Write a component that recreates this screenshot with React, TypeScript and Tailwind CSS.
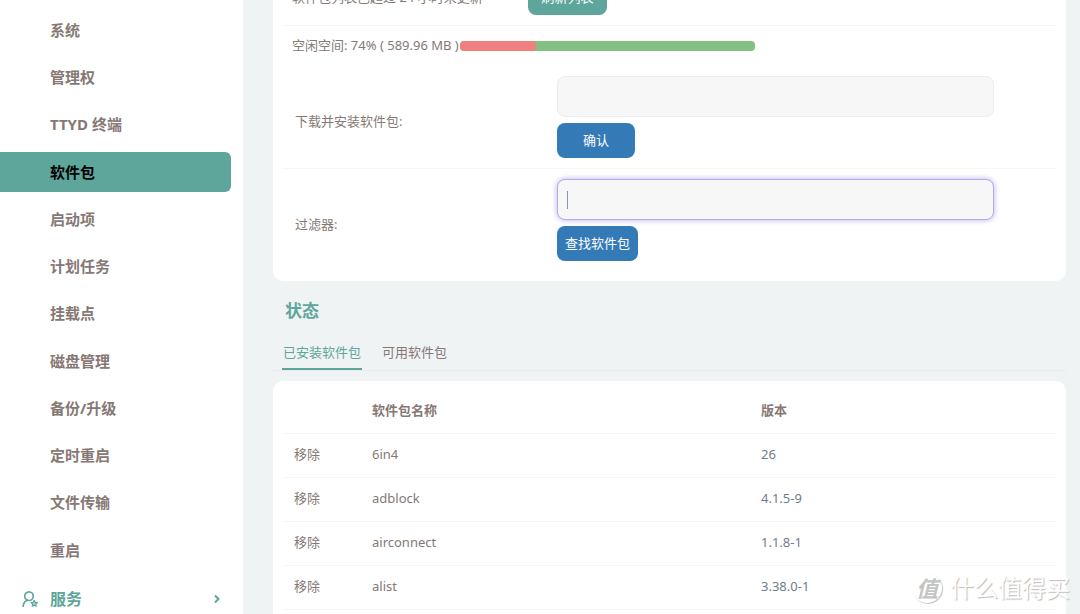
import { useState } from 'react';

interface PackageInfo {
  name: string;
  version: string;
}

const menuItems = [
  '系统',
  '管理权',
  'TTYD 终端',
  '软件包',
  '启动项',
  '计划任务',
  '挂载点',
  '磁盘管理',
  '备份/升级',
  '定时重启',
  '文件传输',
  '重启',
];

const tabs = ['已安装软件包', '可用软件包'];

const packages: PackageInfo[] = [
  { name: '6in4', version: '26' },
  { name: 'adblock', version: '4.1.5-9' },
  { name: 'airconnect', version: '1.1.8-1' },
  { name: 'alist', version: '3.38.0-1' },
];

function Sidebar() {
  return (
    <nav className="flex w-[243px] shrink-0 flex-col bg-white pt-[10px]">
      <ul className="flex flex-1 flex-col justify-between pr-3">
        {menuItems.map((item) => (
          <li key={item}>
            <a
              href="#"
              className={
                item === '软件包'
                  ? 'flex h-10 items-center rounded-r-md bg-[#5ea69b] pl-[50px] text-[15px] font-bold text-black'
                  : 'flex h-10 items-center pl-[50px] text-[15px] font-bold text-[#867874]'
              }
            >
              {item}
            </a>
          </li>
        ))}
      </ul>
      <a href="#" className="flex h-11 items-center pt-[14px] pr-[22px] pl-[22px] text-base font-bold text-[#5ea69b]">
        <svg viewBox="0 0 16 16" className="mr-3 size-4" fill="none" stroke="currentColor" strokeWidth="1.7">
          <circle cx="7" cy="5.2" r="4.300" />
          <path d="M1.200 15.200c.2-3 1.700-4.900 3.900-6" strokeLinecap="round" />
          <path
            d="M12.200 9.300l1 2 2.200.3-1.600 1.500.4 2.200-2-1-2 1 .4-2.200L9 11.600l2.200-.3z"
            fill="currentColor"
            fillOpacity="0.5"
            strokeWidth="1.200"
            strokeLinejoin="round"
          />
        </svg>
        <span className="flex-1">服务</span>
        <svg viewBox="0 0 8 10" className="h-[10px] w-2" fill="none" stroke="currentColor" strokeWidth="2">
          <path d="M2 1.500L5.500 5 2 8.500" />
        </svg>
      </a>
    </nav>
  );
}

function Watermark() {
  return (
    <div className="pointer-events-none absolute right-[10px] bottom-2 flex items-center gap-2 text-white [text-shadow:1px_1px_1px_#bbb]">
      <span className="flex size-[30px] items-center justify-center rounded-full text-[22px] font-bold text-[#c4c4c4] italic shadow-[1px_1px_1px_#c4c4c4] [text-shadow:none]">
        值
      </span>
      <span className="text-[24px] leading-9">什么值得买</span>
    </div>
  );
}

export default function App() {
  const [url, setUrl] = useState('');
  const [filter, setFilter] = useState('');
  const [activeTab, setActiveTab] = useState(0);

  return (
    <div className="relative flex h-screen overflow-hidden bg-[#eff3f4] font-['Noto_Sans','Noto_Sans_CJK_SC',sans-serif] text-[13px] text-[#867874]">
      <Sidebar />

      <main className="min-w-0 flex-1 pr-[14px] pl-[30px]">
        <section className="-mt-[29px] rounded-[10px] bg-white px-[9px] pb-5">
          <div className="flex h-[55px] items-center border-b border-[#f6f6f6] pl-[10px]">
            <span className="w-[236px]">软件包列表已超过 24 小时未更新</span>
            <button type="button" className="h-[34px] w-[79px] rounded-lg bg-[#5ea69b] text-white">
              刷新列表
            </button>
          </div>

          <div className="flex h-10 items-center pl-[10px]">
            <span className="shrink-0 pr-px">空闲空间: 74% ( 589.96 MB )</span>
            <div className="h-[10px] w-[295px] overflow-hidden rounded-sm bg-[#82c182]">
              <div className="h-full rounded-sm bg-[#f08080]" style={{ width: '26%' }} />
            </div>
          </div>

          <div className="flex items-center border-b border-[#f6f6f6] py-[10px] pl-[13px]">
            <label htmlFor="url" className="w-[262px] pt-[10px]">
              下载并安装软件包:
            </label>
            <div className="flex flex-1 flex-col items-start gap-[6px] pr-[63px]">
              <input
                id="url"
                type="text"
                value={url}
                onChange={(e) => setUrl(e.target.value)}
                className="h-[41px] w-full rounded-lg border border-[#ebeeee] bg-[#f7f7f7] px-[10px] outline-none"
              />
              <button type="button" className="h-[35px] w-[78px] rounded-lg bg-[#337ab7] text-white">
                确认
              </button>
            </div>
          </div>

          <div className="flex items-center pt-[10px] pl-[13px]">
            <label htmlFor="filter" className="w-[262px] pt-[10px]">
              过滤器:
            </label>
            <div className="flex flex-1 flex-col items-start gap-[6px] pr-[63px]">
              <div className="relative w-full">
                <input
                  id="filter"
                  type="text"
                  autoFocus
                  value={filter}
                  onChange={(e) => setFilter(e.target.value)}
                  className="block h-[41px] w-full rounded-lg border border-[#b3abec] bg-[#f7f7f7] px-[10px] caret-transparent shadow-[0_0_5px_1px_#c9c3f3] outline-none"
                />
                {filter === '' && (
                  <span className="pointer-events-none absolute top-3 left-[10px] h-[18px] w-px bg-[#8898aa]" />
                )}
              </div>
              <button type="button" className="h-[35px] rounded-lg bg-[#337ab7] px-2 text-white">
                查找软件包
              </button>
            </div>
          </div>
        </section>

        <h3 className="mt-4 pl-3 text-[17px] leading-7 font-bold text-[#5ea69b]">状态</h3>

        <div role="tablist" className="mt-4 flex gap-[19px] border-b border-[#e6eced] pl-[9px]">
          {tabs.map((tab, i) => (
            <button
              key={tab}
              type="button"
              role="tab"
              aria-selected={i === activeTab}
              onClick={() => setActiveTab(i)}
              className={
                i === activeTab
                  ? 'border-b-2 border-[#5ea69b] px-px pt-px pb-[6px] leading-5 text-[#5ea69b]'
                  : 'border-b-2 border-transparent px-px pt-px pb-[6px] leading-5'
              }
            >
              {tab}
            </button>
          ))}
        </div>

        <section className="mt-[10px] rounded-[10px] bg-white px-[9px] pt-2 pb-5">
          <table className="w-full table-fixed text-left">
            <thead>
              <tr className="h-11 border-b border-[#f6f6f6]">
                <th className="w-[78px]" />
                <th className="w-[389px] px-3 font-bold">软件包名称</th>
                <th className="px-3 font-bold">版本</th>
              </tr>
            </thead>
            <tbody>
              {packages.map((pkg) => (
                <tr key={pkg.name} className="h-11 border-b border-[#f6f6f6]">
                  <td className="px-3">
                    <a href="#">移除</a>
                  </td>
                  <td className="px-3">{pkg.name}</td>
                  <td className="px-3 text-[#6f7d8c]">{pkg.version}</td>
                </tr>
              ))}
            </tbody>
          </table>
        </section>
      </main>

      <Watermark />
    </div>
  );
}
